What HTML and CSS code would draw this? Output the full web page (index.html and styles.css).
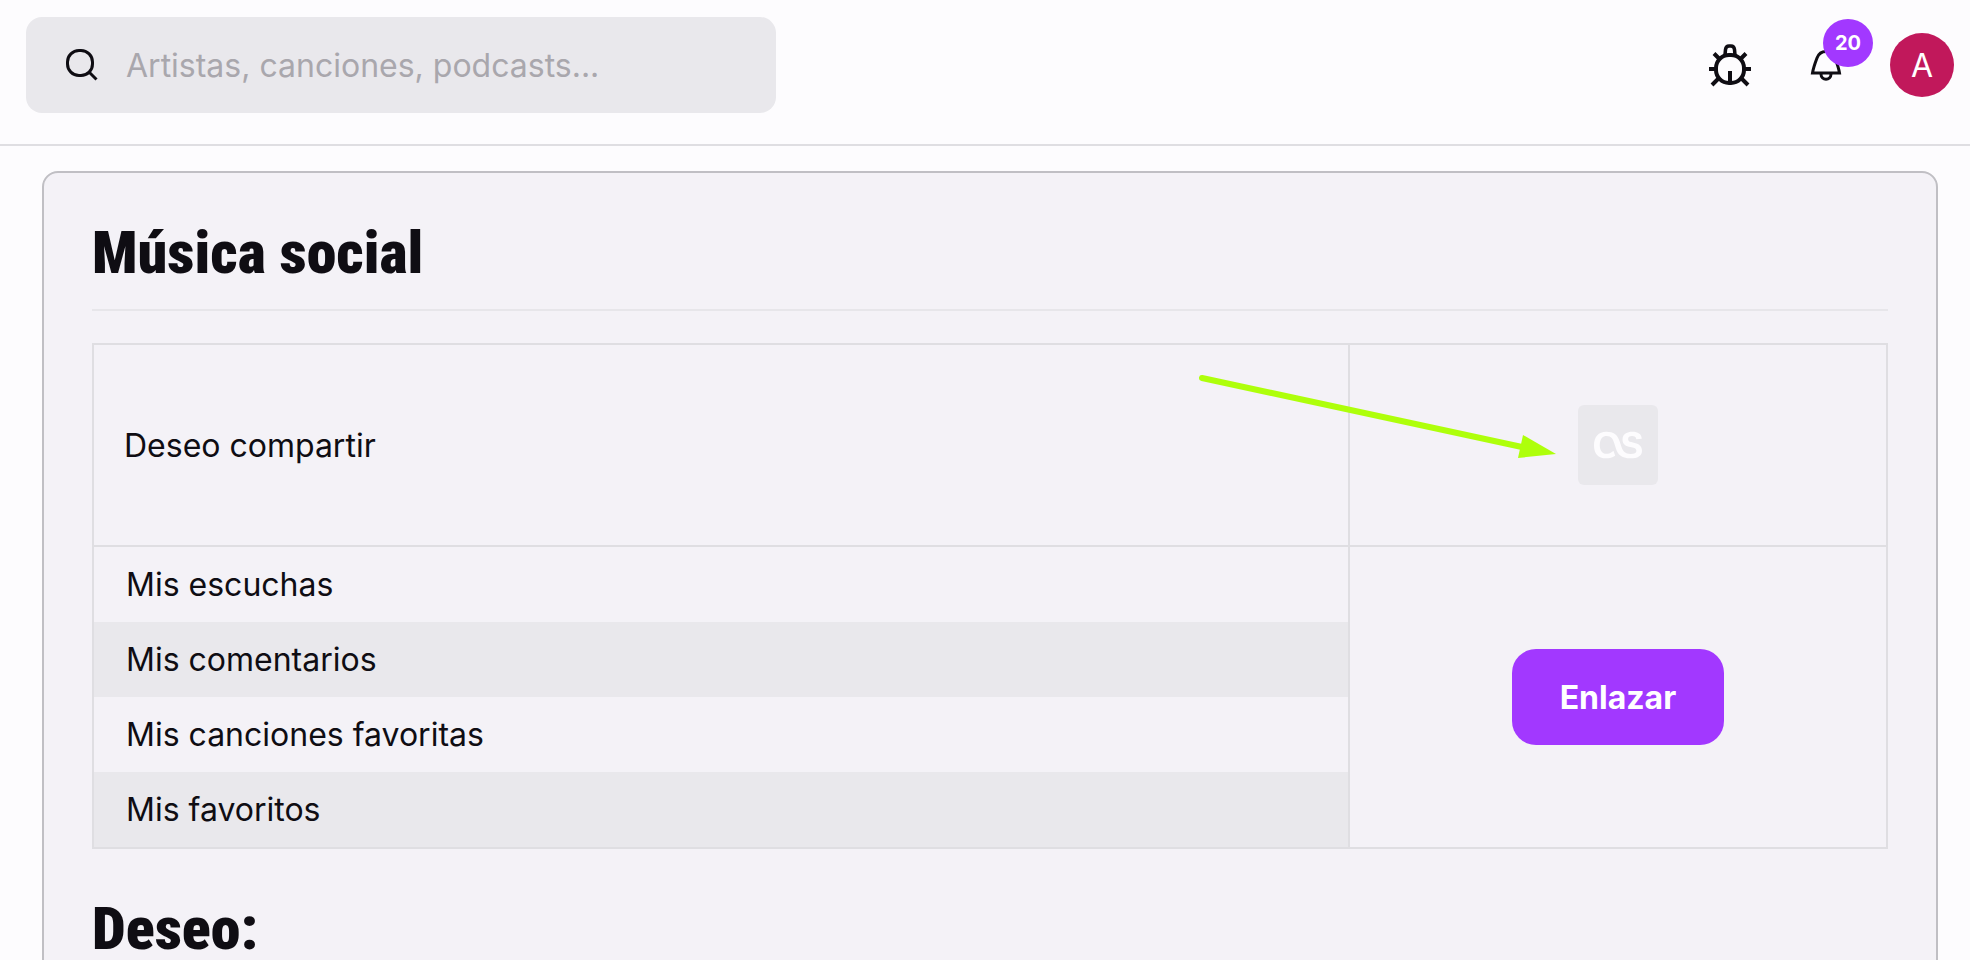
FILE: index.html
```html
<!DOCTYPE html>
<html lang="es">
<head>
<meta charset="UTF-8">
<title>Música social</title>
<link rel="stylesheet" href="styles.css">
</head>

<body>
<header class="topbar">
    <form class="search" role="search">
        <label for="search" aria-label="Buscar">
            <svg width="32" height="32" viewBox="0 0 32 32" fill="none" stroke="currentColor" stroke-width="3">
                <rect x="1.5" y="1.5" width="25" height="25" rx="11.5"/>
                <path d="M22.5 22.5l8 8"/>
            </svg>
        </label>
        <input type="search" id="search" placeholder="Artistas, canciones, podcasts...">
    </form>
    <div class="actions">
        <button class="icon-button" aria-label="Informar de un error">
            <svg width="44" height="44" viewBox="0 0 44 44" fill="none" stroke="currentColor" stroke-width="4">
                <rect x="8" y="12" width="28" height="28" rx="13"/>
                <path d="M17 12l.5-5.500q.5-3.500 3.500-3.500h2q3 0 3.500 3.500l.5 5.500" stroke-width="3.5"/>
                <path d="M22 28v13M1 26h6M37 26h6M6 10.500l5 5M38 10.500l-5 5M4 42l6-6M40 42l-6-6"/>
            </svg>
        </button>
        <button class="icon-button bell" aria-label="Notificaciones">
            <svg width="32" height="32" viewBox="0 0 32 32" fill="none" stroke="currentColor" stroke-width="3">
                <path d="M2.500 24c1-6 3-11 4.500-15C8.500 5 11 2.500 16 2.500s7.500 2.500 9 6.500c1.500 4 3.500 9 4.500 15z"/>
                <path d="M11 25c0 7 10 7 10 0"/>
            </svg>
            <span class="badge">20</span>
        </button>
        <button class="avatar">A</button>
    </div>
</header>

<main class="card">
    <h2 class="title underlined">Música social</h2>
    <table class="share">
        <tr>
            <td class="share-head">Deseo compartir</td>
            <td class="share-side">
                <div class="lastfm">
                    <svg width="48" height="48" viewBox="0 0 24 24" fill="currentColor">
                        <path d="M10.584 17.21l-.88-2.392s-1.43 1.594-3.573 1.594c-1.897 0-3.244-1.649-3.244-4.288 0-3.382 1.704-4.591 3.381-4.591 2.42 0 3.189 1.567 3.849 3.574l.88 2.749c.88 2.666 2.529 4.81 7.285 4.81 3.409 0 5.718-1.044 5.718-3.793 0-2.227-1.265-3.381-3.63-3.931l-1.758-.385c-1.21-.275-1.567-.77-1.567-1.595 0-.934.742-1.484 1.952-1.484 1.32 0 2.034.495 2.144 1.677l2.749-.33c-.22-2.474-1.924-3.492-4.729-3.492-2.474 0-4.893.935-4.893 3.932 0 1.87.907 3.051 3.189 3.601l1.87.44c1.402.33 1.869.907 1.869 1.704 0 1.017-.99 1.43-2.86 1.43-2.776 0-3.93-1.457-4.59-3.464l-.907-2.75c-1.155-3.573-2.997-4.893-6.653-4.893C2.144 5.333 0 7.89 0 12.233c0 4.18 2.144 6.434 5.993 6.434 3.106 0 4.591-1.457 4.591-1.457z"/>
                    </svg>
                    <svg class="arrow" width="370" height="96" viewBox="0 0 370 96">
                        <path d="M12 8L332 77" stroke="#aeff0b" stroke-width="6" stroke-linecap="round"/>
                        <path d="M333 65L366 84L328 88z" fill="#aeff0b"/>
                    </svg>
                </div>
            </td>
        </tr>
        <tr>
            <td>Mis escuchas</td>
            <td class="share-side" rowspan="4"><button class="link-button">Enlazar</button></td>
        </tr>
        <tr>
            <td class="striped">Mis comentarios</td>
        </tr>
        <tr>
            <td>Mis canciones favoritas</td>
        </tr>
        <tr>
            <td class="striped">Mis favoritos</td>
        </tr>
    </table>
    <h2 class="title">Deseo:</h2>
</main>
</body>
</html>
```

FILE: styles.css
```css
* {
    box-sizing: border-box;
}

body {
    margin: 0;
    background-color: #fdfcfe;
    color: #0f0d13;
    font-family: Inter, sans-serif;
    font-size: 32px;
    line-height: 43px;
}

button, input {
    font: inherit;
    color: inherit;
    border: none;
    background: none;
    padding: 0;
}

button {
    cursor: pointer;
}

svg {
    display: block;
}

/* Top bar */
.topbar {
    display: flex;
    align-items: center;
    justify-content: space-between;
    padding: 17px 16px 31px 26px;
    border-bottom: 2px solid #dfdee2;
}

.search {
    display: flex;
    align-items: center;
    gap: 28px;
    width: 750px;
    height: 96px;
    padding: 0 40px;
    border-radius: 16px;
    background-color: #e9e8ec;
}

.search input {
    flex: 1;
    outline: none;
}

.search input::placeholder {
    color: #a9a7ad;
}

.actions {
    display: flex;
    align-items: center;
}

.icon-button {
    margin-right: 58px;
}

.bell {
    position: relative;
    margin-right: 48px;
}

.badge {
    position: absolute;
    left: 13px;
    bottom: 14px;
    width: 50px;
    height: 48px;
    border-radius: 50%;
    background-color: #a238ff;
    color: #fff;
    font-size: 20px;
    font-weight: 700;
    line-height: 48px;
}

.avatar {
    width: 64px;
    height: 64px;
    border-radius: 50%;
    background-color: #c1185b;
    color: #fff;
}

/* Settings card */
.card {
    margin: 25px 32px 32px 42px;
    padding: 48px;
    border: 2px solid #c0bfc4;
    border-radius: 16px;
    background-color: #f4f2f7;
}

.title {
    margin: 0;
    font-family: "Roboto Condensed", "Open Sans Condensed", "Noto Sans ExtraCondensed", "Noto Sans Condensed", Roboto, sans-serif;
    font-size: 60px;
    font-weight: 900;
    line-height: 64px;
}

.underlined {
    margin-bottom: 32px;
    padding-bottom: 24px;
    border-bottom: 2px solid #e7e6ea;
}

.share {
    width: 100%;
    margin-bottom: 48px;
    border: 2px solid #dfdee2;
    border-collapse: collapse;
    table-layout: fixed;
}

.share td {
    padding: 16px 32px;
}

.share .share-head {
    width: 70%;
    height: 202px;
    padding: 0 30px;
    border-bottom: 2px solid #dfdee2;
}

.share .share-side {
    border: 2px solid #dfdee2;
    text-align: center;
}

.striped {
    background-color: #e9e8ec;
}

.lastfm {
    position: relative;
    display: flex;
    align-items: center;
    justify-content: center;
    width: 80px;
    height: 80px;
    margin: 0 auto;
    border-radius: 6px;
    background-color: #e9e8ec;
    color: #fdfcfe;
}

/* Pointer drawn over the table, ends just left of the logo */
.arrow {
    position: absolute;
    top: -35px;
    right: 98px;
}

.link-button {
    display: block;
    height: 96px;
    margin: 0 auto;
    padding: 0 48px;
    border-radius: 24px;
    background-color: #a238ff;
    color: #fff;
    font-weight: 700;
}
```
